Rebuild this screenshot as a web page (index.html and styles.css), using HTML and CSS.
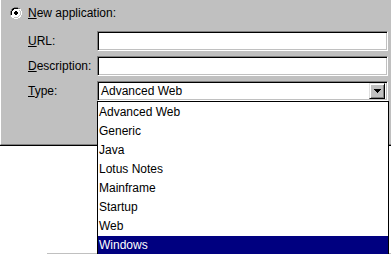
FILE: index.html
```html
<!DOCTYPE html>
<html>
<head lang="en">
    <meta charset="UTF-8">
    <title>New application</title>
    <link rel="stylesheet" href="styles.css">
</head>
<body>
<div class="panel">
    <div class="radio-row">
        <span class="radio">
            <svg width="12" height="12" viewBox="0 0 12 12">
                <path d="M4 0h4v1h2v1h1v2h1v4h-1v2h-1v1h-2v1h-4v-1h-2v-1h-1v-2h-1v-4h1v-2h1v-1h2z" fill="#fff"/>
                <path d="M4 0h4v1h2v1h-2v-1h-4v1h-2v2h-1v4h-1v-4h1v-2h1v-1h2z" fill="#808080"/>
                <path d="M4 1h4v1h-4v1h-1v1h-1v4h-1v-4h1v-2h1v-1zm-2 1h0z" fill="#000"/>
                <path d="M10 2h1v2h1v4h-1v2h-1v1h-2v1h-4v-1h4v-1h2v-2h1v-4h-1z" fill="#fff"/>
                <path d="M9 3h1v1h1v4h-1v1h-1v1h-1v1h-4v-1h4v-1h1v-1h1v-4h-1z" fill="#c0c0c0"/>
                <path d="M5 4h2v1h1v2h-1v1h-2v-1h-1v-2h1z" fill="#000"/>
            </svg>
        </span>
        <span class="radio-label"><u>N</u>ew application:</span>
    </div>
    <div class="fields">
        <div class="field">
            <span class="field-label"><u>U</u>RL:</span>
            <div class="textbox"></div>
        </div>
        <div class="field">
            <span class="field-label"><u>D</u>escription:</span>
            <div class="textbox"></div>
        </div>
        <div class="field">
            <span class="field-label"><u>T</u>ype:</span>
            <div class="combo">
                <span class="combo-text">Advanced Web</span>
                <span class="combo-btn">
                    <svg width="7" height="4" viewBox="0 0 7 4">
                        <path d="M0 0h7v1h-1v1h-1v1h-1v1h-1v-1h-1v-1h-1v-1h-1z" fill="#000"/>
                    </svg>
                </span>
            </div>
        </div>
    </div>
    <ul class="dropdown">
        <li>Advanced Web</li>
        <li>Generic</li>
        <li>Java</li>
        <li>Lotus Notes</li>
        <li>Mainframe</li>
        <li>Startup</li>
        <li>Web</li>
        <li class="selected">Windows</li>
    </ul>
</div>
<div class="lower-edge"></div>
</body>
</html>
```

FILE: styles.css
```css
body{
    margin: 0;
    background: #fff;
    font: 12px/14px "Liberation Sans", Arial, sans-serif;
    color: #000;
}
.panel{
    position: relative;
    height: 144px;
    background: #c0c0c0;
    border-left: 1px solid #fff;
    border-bottom: 1px solid #808080;
    box-shadow: 0 1px 0 #000;
}
.radio-row{
    display: flex;
    align-items: center;
    height: 13px;
    padding: 6px 0 0 9px;
}
.radio{
    display: block;
    width: 12px;
    height: 12px;
    margin-right: 6px;
}
.radio svg{
    display: block;
}
.fields{
    display: flex;
    flex-direction: column;
    gap: 5px;
    padding: 12px 0 0 27px;
}
.field{
    display: flex;
    height: 20px;
}
.field-label{
    width: 69px;
    line-height: 20px;
}
.textbox, .combo{
    box-sizing: border-box;
    width: 291px;
    height: 20px;
    background: #fff;
    border: 1px solid;
    border-color: #808080 #fff #fff #808080;
    box-shadow: inset 1px 1px 0 #000, inset -1px -1px 0 #c0c0c0;
}
.combo{
    display: flex;
    align-items: center;
    padding: 1px 2px 1px 2px;
}
.combo-text{
    flex: 1;
    padding-left: 1px;
    line-height: 16px;
}
.combo-btn{
    box-sizing: border-box;
    display: flex;
    align-items: center;
    justify-content: center;
    width: 16px;
    height: 16px;
    background: #c0c0c0;
    border: 1px solid;
    border-color: #dfdfdf #000 #000 #dfdfdf;
    box-shadow: inset 1px 1px 0 #fff, inset -1px -1px 0 #808080;
}
.dropdown{
    position: absolute;
    left: 96px;
    top: 101px;
    width: 290px;
    margin: 0;
    padding: 1px 0 0;
    list-style: none;
    background: #fff;
    border: 1px solid #000;
    z-index: 2;
}
.dropdown li{
    height: 19px;
    line-height: 19px;
    padding-left: 1px;
}
.dropdown .selected{
    background: #000080;
    color: #fff;
}
.lower-edge{
    height: 1px;
    margin: 108px 0 0 47px;
    background: #c0c0c0;
}
```
